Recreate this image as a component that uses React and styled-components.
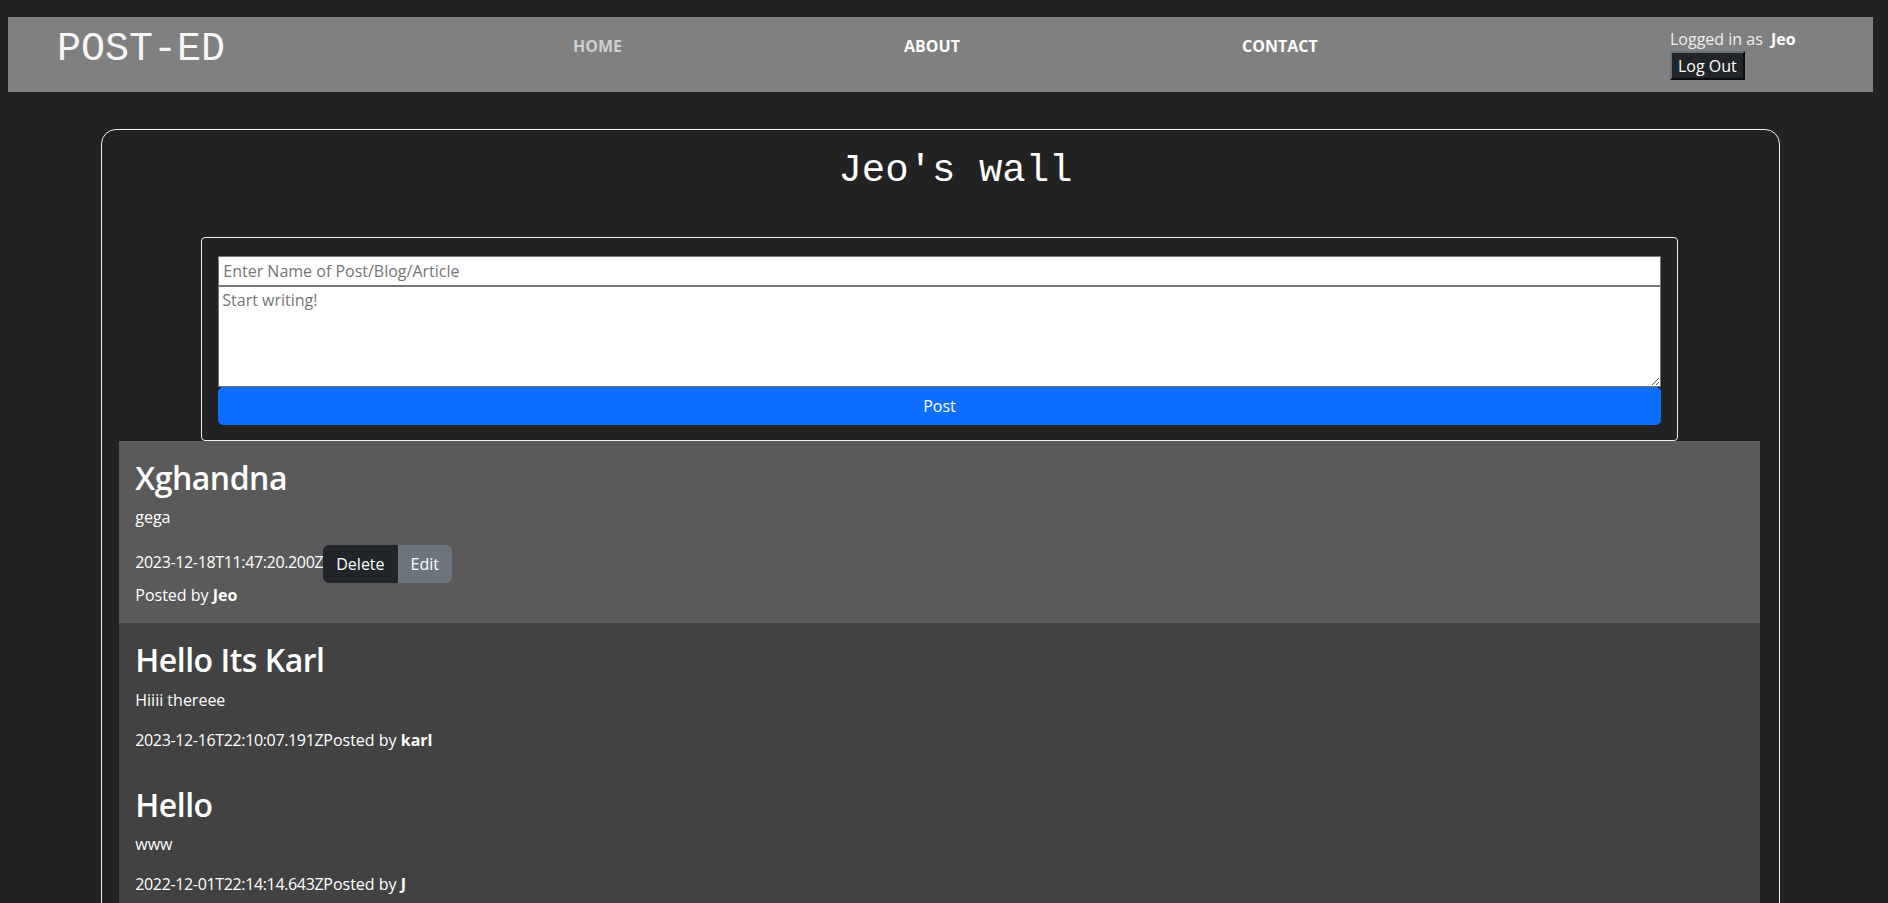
import React from 'react';
import styled, { createGlobalStyle } from 'styled-components';

const GlobalStyle = createGlobalStyle`
  html, body {
    overflow: hidden;
  }
  body {
    margin: 8px 15px 0 8px;
    background-color: #222222;
    color: #ffffff;
    font-family: "Segoe UI", "Open Sans", sans-serif;
    font-size: 16px;
    line-height: 1.5;
  }
  * {
    box-sizing: border-box;
  }
`;

const Page = styled.div`
  height: calc(100vh - 8px);
  overflow: hidden;
  padding-top: 9px;
`;

const Header = styled.header`
  display: flex;
  align-items: flex-start;
  height: 75px;
  padding-left: 49px;
  background-color: #808080;
`;

const Logo = styled.h1`
  margin: 9px 0 0;
  font-family: "Liberation Mono", "Courier New", monospace;
  font-size: 40px;
  font-weight: 400;
  line-height: 48px;
  color: #f6f6f6;
`;

const Nav = styled.nav`
  display: flex;
  gap: 282px;
  margin: 17px 0 0 348px;
`;

const NavLink = styled.a`
  font-size: 16px;
  font-weight: 700;
  line-height: 24px;
  text-transform: uppercase;
  text-decoration: none;
  color: ${({ $active }) => ($active ? '#cfcfcf' : '#ffffff')};
`;

const UserBox = styled.div`
  display: flex;
  flex-direction: column;
  align-items: flex-start;
  width: 203px;
  flex-shrink: 0;
  margin-left: auto;
  padding-top: 10px;
`;

const LoggedText = styled.span`
  line-height: 24px;
  color: #eeeeee;

  b {
    margin-left: 4px;
    color: #ffffff;
  }
`;

const LogOutButton = styled.button`
  height: 29px;
  padding: 0 6px;
  font-family: inherit;
  font-size: 16px;
  color: #ffffff;
  background-color: #212529;
  border-width: 2px;
  border-style: solid;
  border-color: #68707a #0c0c0c #0c0c0c #68707a;
`;

const Wall = styled.main`
  width: 90%;
  margin: 37px auto 0;
  padding: 18px 19px 24px 17px;
  border: 1px solid #f0f0f0;
  border-radius: 15px;
`;

const WallTitle = styled.h2`
  margin: 0;
  padding-left: 32px;
  font-family: "Liberation Mono", "Courier New", monospace;
  font-size: 39px;
  font-weight: 400;
  line-height: 1.2;
  text-align: center;
  color: #ffffff;
`;

const PostForm = styled.form`
  width: 90%;
  margin: 42px auto 0;
  padding: 18px 16px 15px;
  border: 1px solid #f0f0f0;
  border-radius: 4px;
`;

const TitleInput = styled.input`
  display: block;
  width: 100%;
  height: 30px;
  padding: 1px 4px;
  font-family: inherit;
  font-size: 16px;
  border: 1px solid #767676;
  background: #ffffff;

  &::placeholder {
    color: #757575;
  }
`;

const BodyInput = styled.textarea`
  display: block;
  width: 100%;
  height: 101px;
  padding: 2px 3px;
  margin: 0;
  font-family: inherit;
  font-size: 16px;
  line-height: 1.4;
  border: 1px solid #767676;
  background: #ffffff;

  &::placeholder {
    color: #757575;
  }
`;

const SubmitButton = styled.button`
  display: block;
  width: 100%;
  height: 38px;
  padding: 6px 12px;
  font-family: inherit;
  font-size: 16px;
  line-height: 24px;
  color: #ffffff;
  background-color: #0d6efd;
  border: 1px solid #0d6efd;
  border-radius: 5px;
`;

const PostList = styled.section`
  display: flex;
  flex-direction: column;
`;

const PostCard = styled.article`
  padding: 18px 16px 0;
  background-color: ${({ $own }) => ($own ? '#5a5a5a' : '#424242')};

  h3 {
    margin: 0 0 8px;
    font-size: 32px;
    font-weight: 600;
    line-height: 1.2;
    letter-spacing: -0.5px;
  }

  p {
    margin: 0 0 16px;
  }
`;

const DateText = styled.span`
  letter-spacing: -0.35px;
`;

const ButtonGroup = styled.span`
  display: inline-flex;
  vertical-align: middle;
`;

const GroupButton = styled.button`
  height: 38px;
  padding: 6px 12px;
  font-family: inherit;
  font-size: 16px;
  line-height: 24px;
  color: #ffffff;
  background-color: ${({ $variant }) => ($variant === 'dark' ? '#212529' : '#6c757d')};
  border: 1px solid ${({ $variant }) => ($variant === 'dark' ? '#212529' : '#6c757d')};
  border-radius: ${({ $variant }) => ($variant === 'dark' ? '6px 0 0 6px' : '0 6px 6px 0')};
`;

const posts = [
  { id: 1, title: 'Xghandna', body: 'gega', date: '2023-12-18T11:47:20.200Z', author: 'Jeo', own: true },
  { id: 2, title: 'Hello Its Karl', body: 'Hiiii thereee', date: '2023-12-16T22:10:07.191Z', author: 'karl' },
  { id: 3, title: 'Hello', body: 'www', date: '2022-12-01T22:14:14.643Z', author: 'J' },
];

const Post = ({ post }) => (
  <PostCard $own={post.own}>
    <h3>{post.title}</h3>
    <p>{post.body}</p>
    <p>
      <DateText>{post.date}</DateText>
      {post.own && (
        <>
          <ButtonGroup>
            <GroupButton type='button' $variant='dark'>Delete</GroupButton>
            <GroupButton type='button'>Edit</GroupButton>
          </ButtonGroup>
          <br />
        </>
      )}
      Posted by <b>{post.author}</b>
    </p>
  </PostCard>
);

const App = () => {
  return (
    <Page>
      <GlobalStyle />
      <Header>
        <Logo>POST-ED</Logo>
        <Nav>
          <NavLink href='#' $active>Home</NavLink>
          <NavLink href='#'>About</NavLink>
          <NavLink href='#'>Contact</NavLink>
        </Nav>
        <UserBox>
          <LoggedText>
            Logged in as <b>Jeo</b>
          </LoggedText>
          <LogOutButton type='button'>Log Out</LogOutButton>
        </UserBox>
      </Header>

      <Wall>
        <WallTitle>Jeo's wall</WallTitle>
        <PostForm onSubmit={(e) => e.preventDefault()}>
          <TitleInput placeholder='Enter Name of Post/Blog/Article' />
          <BodyInput placeholder='Start writing!' />
          <SubmitButton type='submit'>Post</SubmitButton>
        </PostForm>
        <PostList>
          {posts.map((post) => (
            <Post key={post.id} post={post} />
          ))}
        </PostList>
      </Wall>
    </Page>
  );
};

export default App;
